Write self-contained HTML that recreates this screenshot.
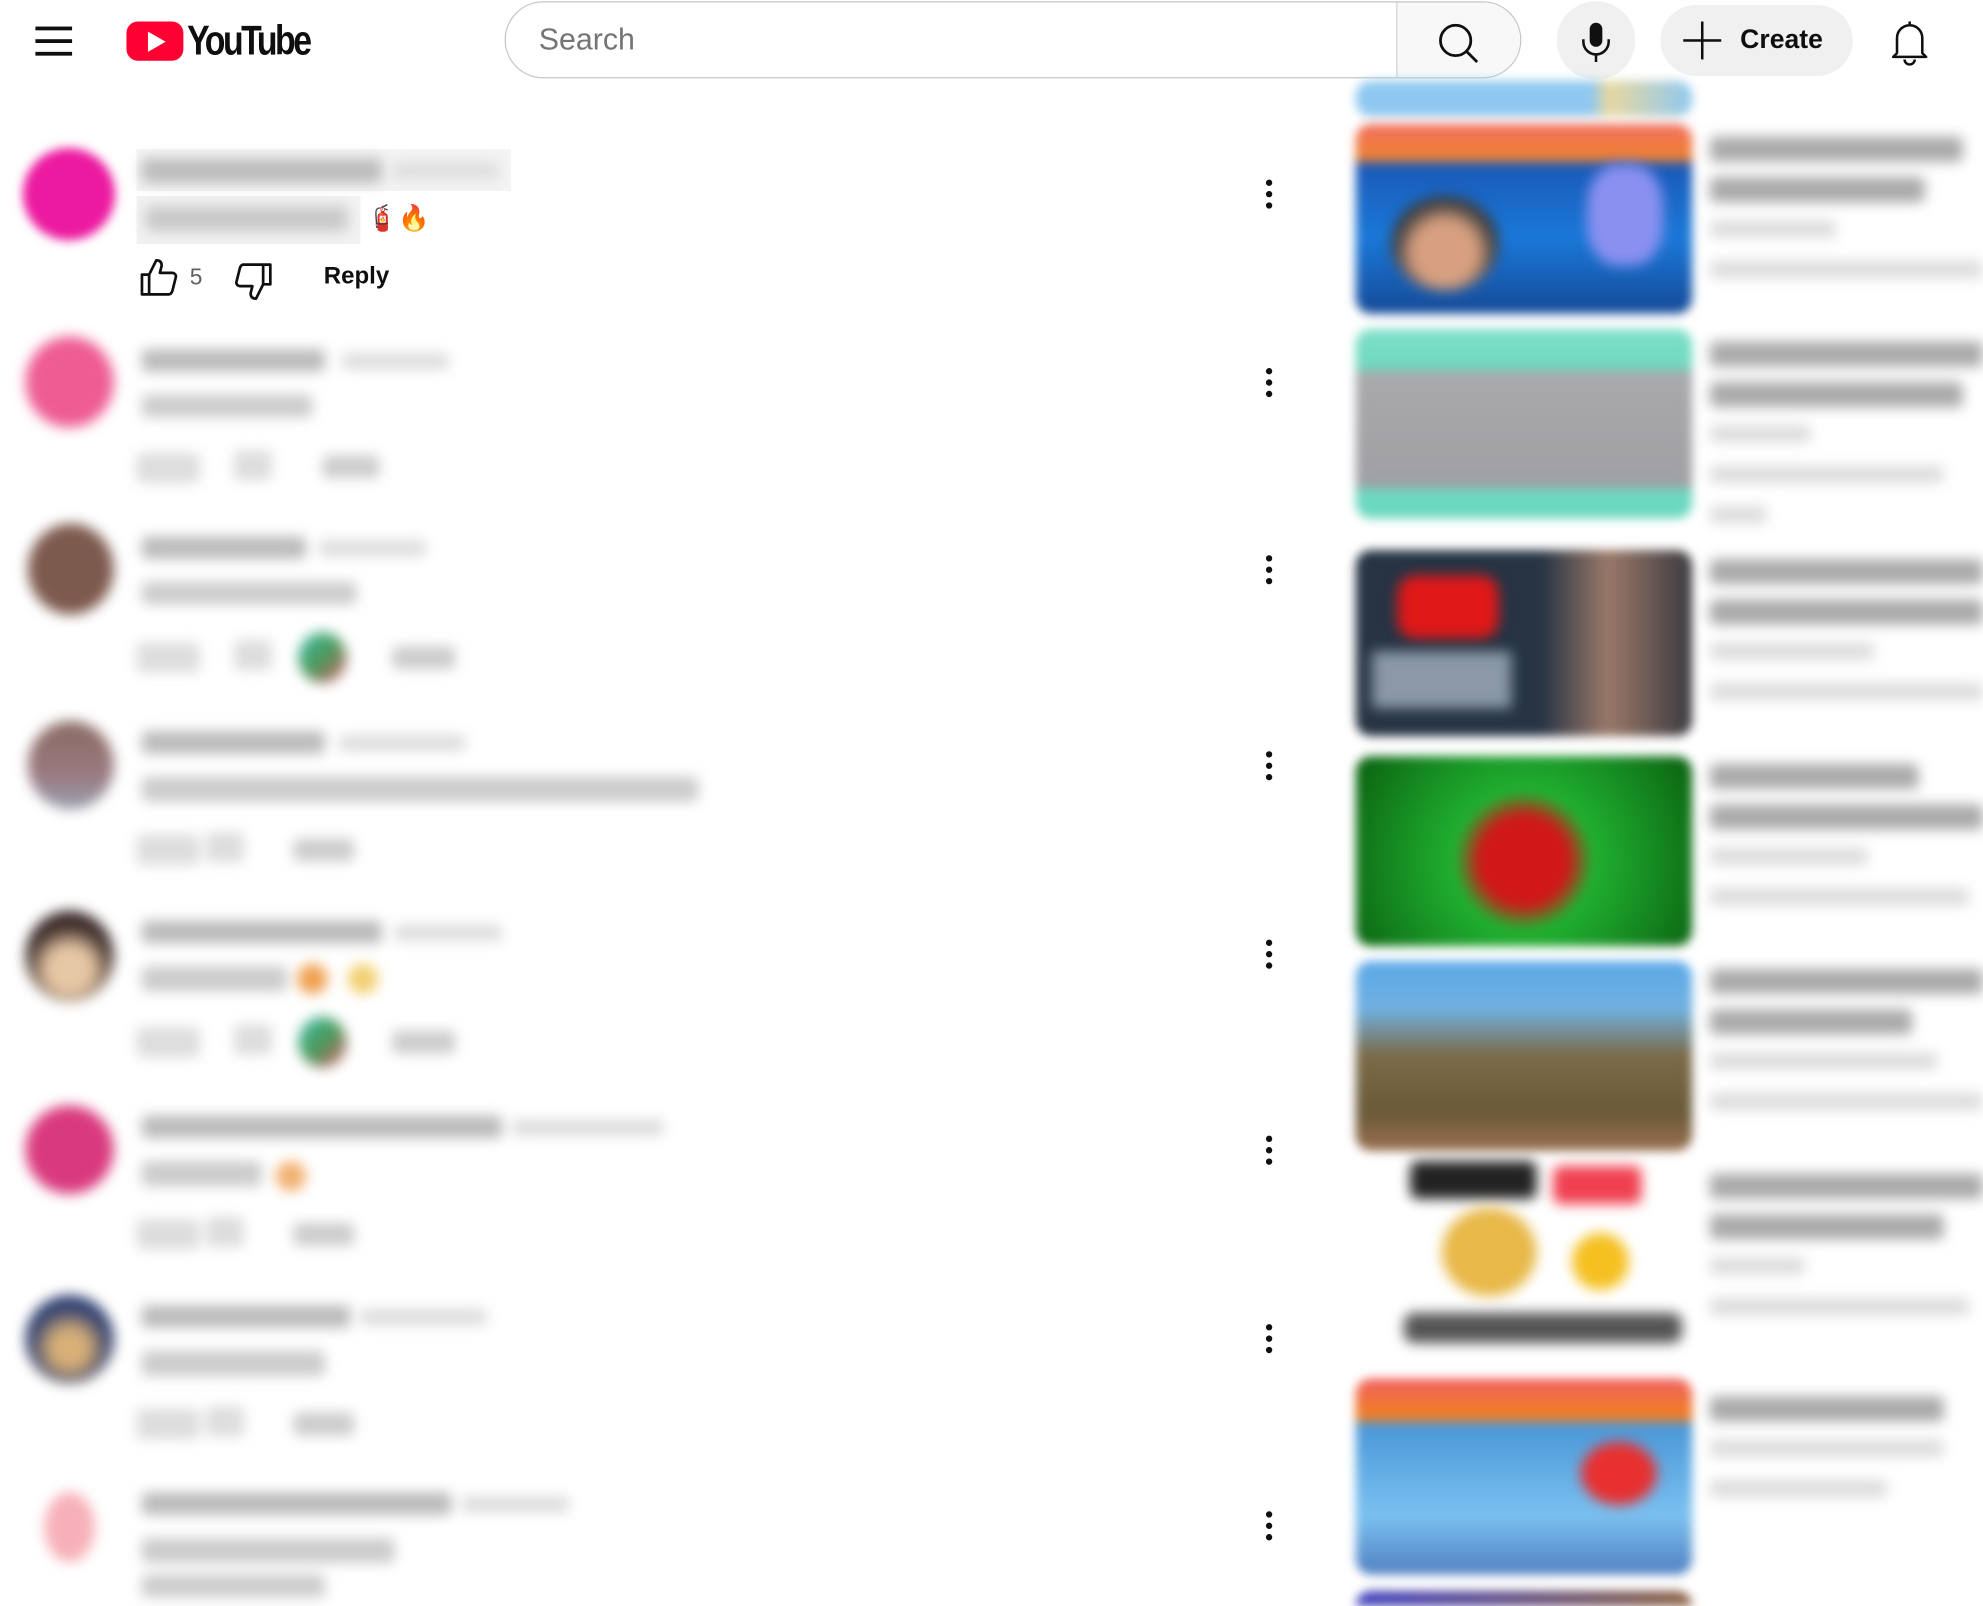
<!DOCTYPE html>
<html><head><meta charset="utf-8">
<style>
html,body{margin:0;padding:0;width:1983px;height:1606px;overflow:hidden;background:#fff}
#clip{position:absolute;left:0;top:0;width:1983px;height:1606px;overflow:hidden}
#w{position:absolute;left:0;top:0;width:1568px;height:1270px;overflow:hidden;transform:scale(1.26467);transform-origin:0 0;font-family:"Liberation Sans",sans-serif}
.a{position:absolute}
.bl{filter:blur(5px)}
.bar{position:absolute;background:#cfcfcf;border-radius:4px}
.dots{position:absolute;left:1001px;width:6px}
.dots i{display:block;width:5px;height:5px;border-radius:50%;background:#0f0f0f;margin-bottom:4px}
.th{position:absolute;left:1072px;width:266px;height:150px;border-radius:12px;filter:blur(4px)}
</style></head><body><div id="clip"><div id="w">
<div class="a" style="left:28px;top:21px;width:29px;height:3px;background:#0f0f0f"></div>
<div class="a" style="left:28px;top:31px;width:29px;height:3px;background:#0f0f0f"></div>
<div class="a" style="left:28px;top:41px;width:29px;height:3px;background:#0f0f0f"></div>
<div class="a" style="left:100px;top:17px;width:45px;height:31px;background:#ff0033;border-radius:9px"></div>
<div class="a" style="left:117px;top:25px;width:0;height:0;border-left:14px solid #fff;border-top:8px solid transparent;border-bottom:8px solid transparent"></div>
<div class="a" style="left:148px;top:13px;font-size:33px;letter-spacing:-2.4px;color:#0f0f0f;transform:scaleX(.81);transform-origin:0 0;font-weight:bold">YouTube</div>
<div class="a" style="left:399px;top:1px;width:804px;height:61px;border:1.5px solid #c6c6c6;border-radius:32px;box-sizing:border-box;overflow:hidden">
 <div class="a" style="left:704px;top:0;width:100px;height:61px;background:#f8f8f8;border-left:1.5px solid #d3d3d3"></div>
 <div class="a" style="left:26px;top:16px;font-size:24px;color:#757575">Search</div>
 <svg class="a" style="left:735px;top:14px" width="36" height="36" viewBox="0 0 36 36"><circle cx="16" cy="16" r="12" fill="none" stroke="#0f0f0f" stroke-width="2.2"/><line x1="24.5" y1="24.5" x2="33" y2="33" stroke="#0f0f0f" stroke-width="2.2"/></svg>
</div>
<div class="a" style="left:1231px;top:1px;width:62px;height:62px;border-radius:50%;background:#f0f0f0"></div>
<svg class="a" style="left:1248px;top:16px" width="28" height="34" viewBox="0 0 28 34"><rect x="9" y="2" width="10" height="19" rx="5" fill="#0f0f0f"/><path d="M4 15v2a10 10 0 0 0 20 0v-2" fill="none" stroke="#0f0f0f" stroke-width="2"/><line x1="14" y1="27" x2="14" y2="33" stroke="#0f0f0f" stroke-width="2"/></svg>
<div class="a" style="left:1313px;top:4px;width:152px;height:56px;border-radius:28px;background:#f0f0f0"></div>
<div class="a" style="left:1331px;top:31px;width:30px;height:2px;background:#0f0f0f"></div>
<div class="a" style="left:1345px;top:17px;width:2px;height:30px;background:#0f0f0f"></div>
<div class="a" style="left:1376px;top:20px;font-size:21px;font-weight:bold;color:#0f0f0f">Create</div>
<svg class="a" style="left:1494px;top:14px" width="32" height="38" viewBox="0 0 32 38"><path d="M16 3v2M6 28V16a10 10 0 0 1 20 0v12l3 3H3z" fill="none" stroke="#0f0f0f" stroke-width="2" stroke-linejoin="round"/><path d="M12 33a4 4 0 0 0 8 0" fill="none" stroke="#0f0f0f" stroke-width="2"/></svg>

<div class="a" style="left:18px;top:117px;width:73px;height:73px;border-radius:50%;background:#ec1aa0;filter:blur(4px)"></div>
<div class="a" style="left:108px;top:118px;width:296px;height:33px;background:#f4f4f4"></div>
<div class="bar bl" style="left:112px;top:125px;width:190px;height:20px;background:#bdbdbd"></div>
<div class="bar bl" style="left:310px;top:128px;width:85px;height:14px;background:#dedede"></div>
<div class="a" style="left:108px;top:155px;width:177px;height:38px;background:#f2f2f2"></div>
<div class="bar bl" style="left:115px;top:163px;width:160px;height:20px;background:#c9c9c9"></div>
<div class="a" style="left:290px;top:160px;font-size:20px">🧯🔥</div>
<svg class="a" style="left:108px;top:203px" width="34" height="34" viewBox="0 0 24 24"><path d="M3 10h4v11H3zM7 10l4-8c2 0 3 1 3 3l-1 4h7c1 0 2 1 2 2l-2 8c-.3 1-1 2-2 2H7" fill="none" stroke="#0f0f0f" stroke-width="1.5" stroke-linejoin="round"/></svg>
<div class="a" style="left:150px;top:209px;font-size:18px;color:#606060">5</div>
<svg class="a" style="left:184px;top:205px" width="34" height="34" viewBox="0 0 24 24"><path d="M21 14h-4V3h4zM17 14l-4 8c-2 0-3-1-3-3l1-4H4c-1 0-2-1-2-2l2-8c.3-1 1-2 2-2h11" fill="none" stroke="#0f0f0f" stroke-width="1.5" stroke-linejoin="round"/></svg>
<div class="a" style="left:256px;top:208px;font-size:19px;font-weight:bold;color:#0f0f0f">Reply</div>
<div class="dots" style="top:142px"><i></i><i></i><i></i></div>

<div class="bl">
<div class="a" style="left:20px;top:266px;width:70px;height:72px;border-radius:50%;background:#ee5c93"></div>
<div class="bar" style="left:112px;top:276px;width:145px;height:18px;background:#bbb"></div><div class="bar" style="left:270px;top:279px;width:85px;height:13px;background:#ddd"></div>
<div class="bar" style="left:112px;top:312px;width:135px;height:18px;background:#ccc"></div>
<div class="bar" style="left:108px;top:358px;width:50px;height:24px;background:#ddd"></div><div class="bar" style="left:185px;top:356px;width:30px;height:24px;background:#ddd"></div><div class="bar" style="left:255px;top:360px;width:45px;height:18px;background:#ccc"></div>
<div class="a" style="left:22px;top:414px;width:68px;height:72px;border-radius:50%;background:#7d5a4e"></div>
<div class="bar" style="left:112px;top:424px;width:130px;height:18px;background:#bbb"></div><div class="bar" style="left:252px;top:427px;width:85px;height:13px;background:#ddd"></div>
<div class="bar" style="left:112px;top:460px;width:170px;height:18px;background:#ccc"></div>
<div class="bar" style="left:108px;top:508px;width:50px;height:24px;background:#ddd"></div><div class="bar" style="left:185px;top:506px;width:30px;height:24px;background:#ddd"></div>
<div class="a" style="left:236px;top:500px;width:38px;height:40px;border-radius:50%;background:linear-gradient(135deg,#3bbfb0,#4a9b5a 50%,#e05a6a)"></div>
<div class="bar" style="left:310px;top:511px;width:50px;height:18px;background:#ccc"></div>
<div class="a" style="left:22px;top:570px;width:68px;height:70px;border-radius:50%;background:linear-gradient(#8a6a62,#9a7a80 60%,#9aa0b0)"></div>
<div class="bar" style="left:112px;top:578px;width:145px;height:18px;background:#bbb"></div><div class="bar" style="left:268px;top:581px;width:100px;height:13px;background:#ddd"></div>
<div class="bar" style="left:112px;top:614px;width:440px;height:20px;background:#ccc"></div>
<div class="bar" style="left:108px;top:660px;width:50px;height:24px;background:#ddd"></div><div class="bar" style="left:163px;top:658px;width:30px;height:24px;background:#ddd"></div><div class="bar" style="left:232px;top:663px;width:48px;height:18px;background:#ccc"></div>
<div class="a" style="left:20px;top:720px;width:70px;height:72px;border-radius:50%;background:radial-gradient(circle at 50% 65%,#e7c8a5 30%,#3a2a28 60%)"></div>
<div class="bar" style="left:112px;top:728px;width:190px;height:18px;background:#bbb"></div><div class="bar" style="left:312px;top:731px;width:85px;height:13px;background:#ddd"></div>
<div class="bar" style="left:112px;top:764px;width:115px;height:20px;background:#ccc"></div>
<div class="a" style="left:235px;top:762px;width:24px;height:24px;border-radius:50%;background:#f0a050"></div><div class="a" style="left:275px;top:762px;width:24px;height:24px;border-radius:50%;background:#f2d070"></div>
<div class="bar" style="left:108px;top:812px;width:50px;height:24px;background:#ddd"></div><div class="bar" style="left:185px;top:810px;width:30px;height:24px;background:#ddd"></div>
<div class="a" style="left:236px;top:804px;width:38px;height:40px;border-radius:50%;background:linear-gradient(135deg,#3bbfb0,#4a9b5a 50%,#e05a6a)"></div>
<div class="bar" style="left:310px;top:815px;width:50px;height:18px;background:#ccc"></div>
<div class="a" style="left:20px;top:874px;width:70px;height:70px;border-radius:50%;background:#d93a7e"></div>
<div class="bar" style="left:112px;top:882px;width:285px;height:18px;background:#bbb"></div><div class="bar" style="left:405px;top:885px;width:120px;height:13px;background:#ddd"></div>
<div class="bar" style="left:112px;top:918px;width:95px;height:20px;background:#ccc"></div>
<div class="a" style="left:218px;top:918px;width:24px;height:24px;border-radius:50%;background:#f2b070"></div>
<div class="bar" style="left:108px;top:964px;width:50px;height:24px;background:#ddd"></div><div class="bar" style="left:163px;top:962px;width:30px;height:24px;background:#ddd"></div><div class="bar" style="left:232px;top:967px;width:48px;height:18px;background:#ccc"></div>
<div class="a" style="left:20px;top:1024px;width:70px;height:70px;border-radius:50%;background:radial-gradient(circle at 50% 60%,#d8b078 25%,#2e3e70 60%)"></div>
<div class="bar" style="left:112px;top:1032px;width:165px;height:18px;background:#bbb"></div><div class="bar" style="left:285px;top:1035px;width:100px;height:13px;background:#ddd"></div>
<div class="bar" style="left:112px;top:1068px;width:145px;height:20px;background:#ccc"></div>
<div class="bar" style="left:108px;top:1114px;width:50px;height:24px;background:#ddd"></div><div class="bar" style="left:163px;top:1112px;width:30px;height:24px;background:#ddd"></div><div class="bar" style="left:232px;top:1117px;width:48px;height:18px;background:#ccc"></div>
<div class="a" style="left:35px;top:1180px;width:40px;height:55px;border-radius:50%;background:#f7b0b8"></div>
<div class="bar" style="left:112px;top:1180px;width:245px;height:18px;background:#bbb"></div><div class="bar" style="left:365px;top:1183px;width:85px;height:13px;background:#ddd"></div>
<div class="bar" style="left:112px;top:1216px;width:200px;height:20px;background:#ccc"></div>
<div class="bar" style="left:112px;top:1245px;width:145px;height:18px;background:#ccc"></div>
</div>
<div class="dots" style="top:291px"><i></i><i></i><i></i></div>
<div class="dots" style="top:439px"><i></i><i></i><i></i></div>
<div class="dots" style="top:594px"><i></i><i></i><i></i></div>
<div class="dots" style="top:743px"><i></i><i></i><i></i></div>
<div class="dots" style="top:898px"><i></i><i></i><i></i></div>
<div class="dots" style="top:1047px"><i></i><i></i><i></i></div>
<div class="dots" style="top:1195px"><i></i><i></i><i></i></div>

<div class="th" style="top:64px;height:28px;background:linear-gradient(90deg,#8ec8f0 70%,#e8d8a0 75%,#8ec8f0)"></div>
<div class="th" style="top:98px;background:linear-gradient(#f07060 0,#f08030 18%,#1a5ab8 22%,#1a78d8 60%,#154a98)"></div>
<div class="a bl" style="left:1100px;top:155px;width:85px;height:75px;border-radius:50%;background:radial-gradient(circle at 50% 60%,#d8a080 40%,#3a3a3a 65%)"></div>
<div class="a bl" style="left:1255px;top:130px;width:60px;height:80px;border-radius:40%;background:#8a90f0"></div>
<div class="th" style="top:260px;background:linear-gradient(#7ee0c8 0,#70d8c0 20%,#a9a9ac 24%,#a0a0a4 82%,#6cd8c0 86%)"></div>
<div class="th" style="top:435px;height:147px;background:linear-gradient(90deg,#263444 55%,#9a7868 75%,#3a3a40)"></div>
<div class="a bl" style="left:1105px;top:455px;width:80px;height:50px;border-radius:14px;background:#e01818"></div>
<div class="a bl" style="left:1085px;top:515px;width:110px;height:45px;background:#8a98a8"></div>
<div class="th" style="top:598px;background:radial-gradient(circle at 50% 55%,#d01818 22%,#20b030 35%,#0a6010 100%)"></div>
<div class="th" style="top:760px;background:linear-gradient(#5aa8e8 0,#70b0e0 25%,#7a6a48 50%,#6a5a38 80%,#9a7050)"></div>
<div class="a bl" style="left:1115px;top:918px;width:100px;height:30px;background:#222;border-radius:6px"></div>
<div class="a bl" style="left:1228px;top:922px;width:70px;height:30px;background:#f04050;border-radius:6px"></div>
<div class="a bl" style="left:1140px;top:955px;width:75px;height:70px;border-radius:50%;background:#e8b848"></div>
<div class="a bl" style="left:1243px;top:975px;width:45px;height:45px;border-radius:50%;background:#f5c020"></div>
<div class="a bl" style="left:1110px;top:1038px;width:220px;height:24px;background:#555;border-radius:8px"></div>
<div class="th" style="top:1090px;height:155px;background:linear-gradient(#f06060 0,#f08020 20%,#4a98d8 24%,#7ac0f0 70%,#5080c0)"></div>
<div class="a bl" style="left:1250px;top:1140px;width:60px;height:50px;border-radius:50%;background:#e83030"></div>
<div class="th" style="top:1258px;height:12px;border-radius:12px 12px 0 0;background:linear-gradient(90deg,#4040c0,#8a6040)"></div>

<div class="bl">
<div class="bar" style="left:1352px;top:108px;width:200px;height:20px;background:#aaa"></div>
<div class="bar" style="left:1352px;top:140px;width:170px;height:20px;background:#aaa"></div>
<div class="bar" style="left:1352px;top:174px;width:100px;height:14px;background:#ddd"></div>
<div class="bar" style="left:1352px;top:206px;width:216px;height:14px;background:#ddd"></div>
<div class="bar" style="left:1352px;top:270px;width:216px;height:20px;background:#aaa"></div>
<div class="bar" style="left:1352px;top:302px;width:200px;height:20px;background:#aaa"></div>
<div class="bar" style="left:1352px;top:336px;width:80px;height:14px;background:#ddd"></div>
<div class="bar" style="left:1352px;top:368px;width:185px;height:14px;background:#ddd"></div>
<div class="bar" style="left:1352px;top:400px;width:45px;height:14px;background:#ddd"></div>
<div class="bar" style="left:1352px;top:442px;width:216px;height:20px;background:#aaa"></div>
<div class="bar" style="left:1352px;top:474px;width:216px;height:20px;background:#aaa"></div>
<div class="bar" style="left:1352px;top:508px;width:130px;height:14px;background:#ddd"></div>
<div class="bar" style="left:1352px;top:540px;width:216px;height:14px;background:#ddd"></div>
<div class="bar" style="left:1352px;top:604px;width:165px;height:20px;background:#aaa"></div>
<div class="bar" style="left:1352px;top:636px;width:216px;height:20px;background:#aaa"></div>
<div class="bar" style="left:1352px;top:670px;width:125px;height:14px;background:#ddd"></div>
<div class="bar" style="left:1352px;top:702px;width:205px;height:14px;background:#ddd"></div>
<div class="bar" style="left:1352px;top:766px;width:216px;height:20px;background:#aaa"></div>
<div class="bar" style="left:1352px;top:798px;width:160px;height:20px;background:#aaa"></div>
<div class="bar" style="left:1352px;top:832px;width:180px;height:14px;background:#ddd"></div>
<div class="bar" style="left:1352px;top:864px;width:216px;height:14px;background:#ddd"></div>
<div class="bar" style="left:1352px;top:928px;width:216px;height:20px;background:#aaa"></div>
<div class="bar" style="left:1352px;top:960px;width:185px;height:20px;background:#aaa"></div>
<div class="bar" style="left:1352px;top:994px;width:75px;height:14px;background:#ddd"></div>
<div class="bar" style="left:1352px;top:1026px;width:205px;height:14px;background:#ddd"></div>
<div class="bar" style="left:1352px;top:1104px;width:185px;height:20px;background:#aaa"></div>
<div class="bar" style="left:1352px;top:1138px;width:185px;height:14px;background:#ddd"></div>
<div class="bar" style="left:1352px;top:1170px;width:140px;height:14px;background:#ddd"></div>
</div>
</div></div></body></html>
